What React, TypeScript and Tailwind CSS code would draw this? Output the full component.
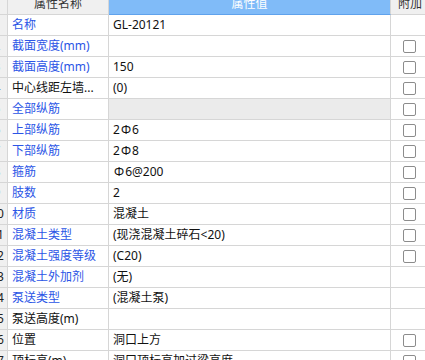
import React from "react";

type Row = {
  name: string;
  value: string;
  blue: boolean;
  check: boolean;
  grayValue?: boolean;
};

const rows: Row[] = [
  { name: "名称", value: "GL-20121", blue: true, check: false },
  { name: "截面宽度(mm)", value: "", blue: true, check: true },
  { name: "截面高度(mm)", value: "150", blue: true, check: true },
  { name: "中心线距左墙...", value: "(0)", blue: false, check: true },
  { name: "全部纵筋", value: "", blue: true, check: true, grayValue: true },
  { name: "上部纵筋", value: "2Φ6", blue: true, check: true },
  { name: "下部纵筋", value: "2Φ8", blue: true, check: true },
  { name: "箍筋", value: "Φ6@200", blue: true, check: true },
  { name: "肢数", value: "2", blue: true, check: true },
  { name: "材质", value: "混凝土", blue: true, check: true },
  { name: "混凝土类型", value: "(现浇混凝土碎石<20)", blue: true, check: true },
  { name: "混凝土强度等级", value: "(C20)", blue: true, check: true },
  { name: "混凝土外加剂", value: "(无)", blue: true, check: false },
  { name: "泵送类型", value: "(混凝土泵)", blue: true, check: false },
  { name: "泵送高度(m)", value: "", blue: false, check: false },
  { name: "位置", value: "洞口上方", blue: false, check: true },
  { name: "顶标高(m)", value: "洞口顶标高加过梁高度", blue: false, check: true },
];

function Checkbox() {
  return (
    <div className="w-[13px] h-[13px] rounded-[2px] border border-[#8c8c8c] bg-white" />
  );
}

function Value({ text }: { text: string }) {
  const parts = text.split("Φ");
  return (
    <>
      {parts.map((p, i) => (
        <React.Fragment key={i}>
          {i > 0 ? <span className="mx-[1px]">Φ</span> : null}
          {p}
        </React.Fragment>
      ))}
    </>
  );
}

export default function App() {
  return (
    <div
      className="w-[425px] h-[360px] overflow-hidden bg-white text-[12px] leading-none"
      style={{ fontFamily: '"Noto Sans", "Noto Sans CJK SC", sans-serif' }}
    >
      <div className="w-[429px] mt-[-6px]">
        {/* header */}
        <div className="grid grid-cols-[8px_101px_282px_38px] h-[21px]">
          <div className="bg-[#f0f0f0] border-r border-b border-[#d6d6d6]" />
          <div className="bg-[#f0f0f0] border-r border-b border-[#d6d6d6] flex items-center justify-center text-[#333333]">
            属性名称
          </div>
          <div className="bg-[#80bbf8] border-r border-b border-r-[#d6d6d6] border-b-[#5fa2ec] flex items-center justify-center text-white">
            属性值
          </div>
          <div className="bg-[#f0f0f0] border-b border-[#d6d6d6] flex items-center justify-center text-[#333333] whitespace-nowrap">
            附加
          </div>
        </div>
        {rows.map((r, i) => (
          <div key={i} className="grid grid-cols-[8px_101px_282px_38px] h-[21px]">
            <div className="bg-[#f0f0f0] border-r border-b border-[#d6d6d6] overflow-hidden flex items-center">
              <div className="w-[20px] ml-[-13px] shrink-0 text-center text-[#222222]">{i + 1}</div>
            </div>
            <div
              className={`border-r border-b border-[#d6d6d6] flex items-center pl-[4px] whitespace-nowrap overflow-hidden ${
                r.blue ? "text-[#2b55e6]" : "text-[#111111]"
              }`}
            >
              {r.name}
            </div>
            <div
              className={`border-r border-b border-[#d6d6d6] flex items-center pl-[4px] whitespace-nowrap overflow-hidden text-[#111111] ${
                r.grayValue ? "bg-[#ebebeb]" : "bg-white"
              }`}
            >
              <Value text={r.value} />
            </div>
            <div className="border-b border-[#d6d6d6] flex items-center pl-[12px]">
              {r.check ? <Checkbox /> : null}
            </div>
          </div>
        ))}
      </div>
    </div>
  );
}
